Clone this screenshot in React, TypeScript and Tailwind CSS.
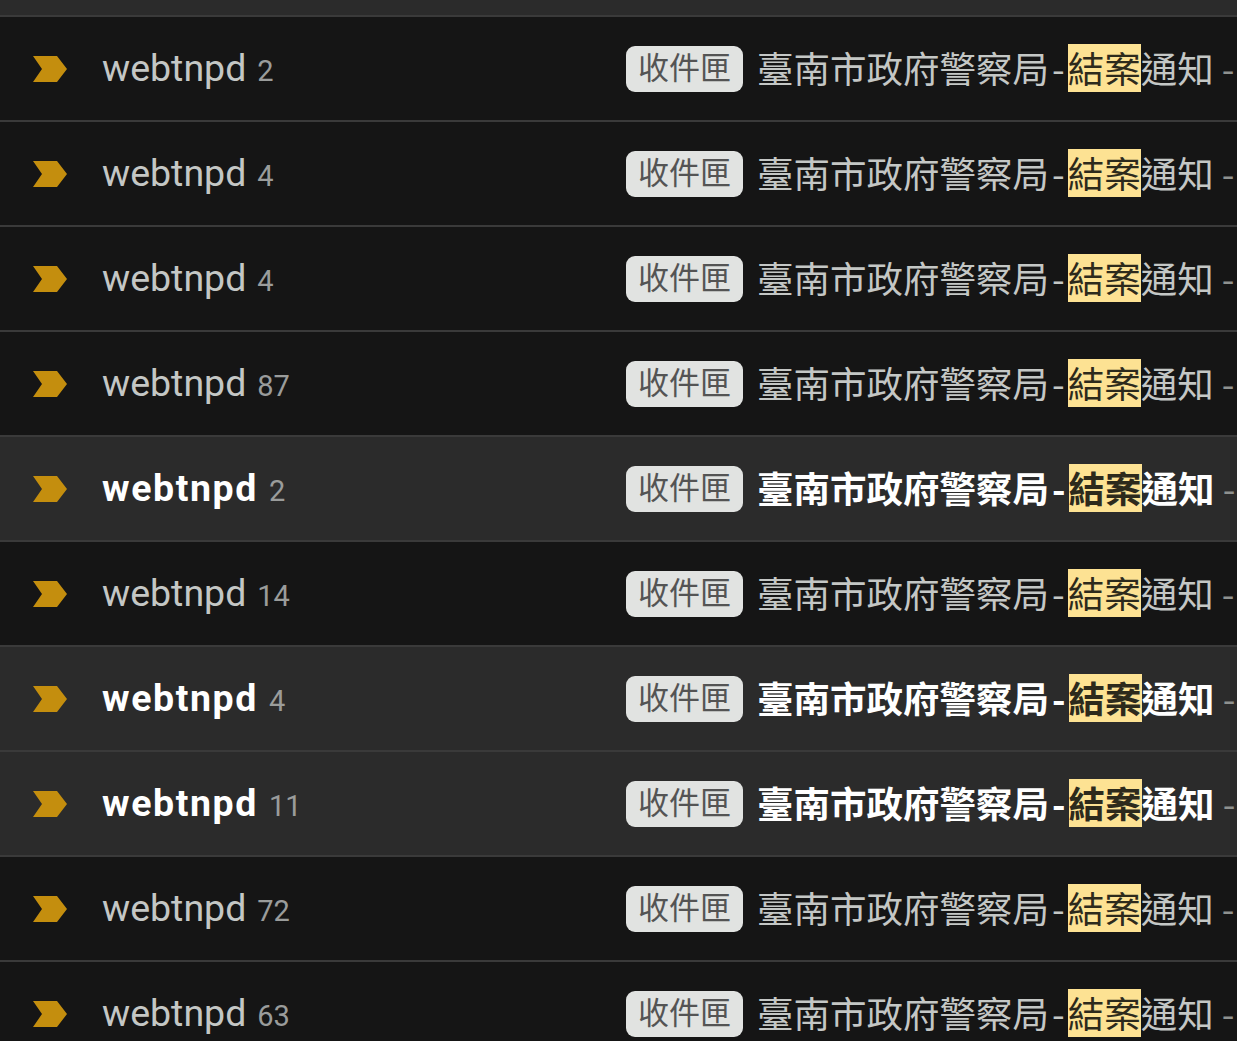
const rows = [
  { count: '2', unread: false },
  { count: '4', unread: false },
  { count: '4', unread: false },
  { count: '87', unread: false },
  { count: '2', unread: true },
  { count: '14', unread: false },
  { count: '4', unread: true },
  { count: '11', unread: true },
  { count: '72', unread: false },
  { count: '63', unread: false },
];

const ImportantMarker = () => (
  <svg width="34" height="26" viewBox="0 0 34 26" className="shrink-0">
    <polygon points="0,0 24,0 34,13 24,26 0,26 9,13" fill="#c48e0e" />
  </svg>
);

const MailRow = ({ count, unread }: { count: string; unread: boolean }) => (
  <div
    className={`flex h-[105px] items-center overflow-hidden border-t-2 border-[#3a3a3a] pl-[33px] ${
      unread ? 'bg-[#2b2b2b]' : 'bg-[#151515]'
    }`}
  >
    <ImportantMarker />
    <div className="ml-[35px] flex w-[524px] shrink-0 items-baseline whitespace-nowrap">
      <span
        className={`text-[37.5px] ${
          unread ? 'font-bold tracking-[1.6px] text-white' : 'text-[#c4c7c5]'
        }`}
      >
        webtnpd
      </span>
      <span className="ml-[11px] text-[29px] text-[#9a9c9b]">{count}</span>
    </div>
    <div className="flex h-[46px] shrink-0 items-center rounded-[9px] bg-[#e1e3e1] px-[12px] text-[31px] leading-none text-[#545454]">
      收件匣
    </div>
    <div
      className={`ml-[14px] min-w-0 flex-1 overflow-hidden whitespace-nowrap text-[36.5px] ${
        unread ? 'font-bold text-white' : 'text-[#c4c7c5]'
      }`}
      style={{ fontFamily: '"Noto Sans CJK TC", sans-serif' }}
    >
      臺南市政府警察局<span className="mx-[3px]">-</span>
      <span className="inline-block h-[48px] bg-[#fde293] leading-[48px] text-[#2d2a1c]">
        結案
      </span>
      通知
      <span className="font-normal text-[#8e918f]"> - 您好</span>
    </div>
  </div>
);

export default function App() {
  return (
    <div
      className="h-[1041px] w-[1237px] overflow-hidden bg-[#151515]"
      style={{ fontFamily: 'Roboto, "Noto Sans CJK TC", sans-serif' }}
    >
      <div className="h-[15px] bg-[#2b2b2b]" />
      {rows.map((row, key) => (
        <MailRow key={key} count={row.count} unread={row.unread} />
      ))}
    </div>
  );
}
